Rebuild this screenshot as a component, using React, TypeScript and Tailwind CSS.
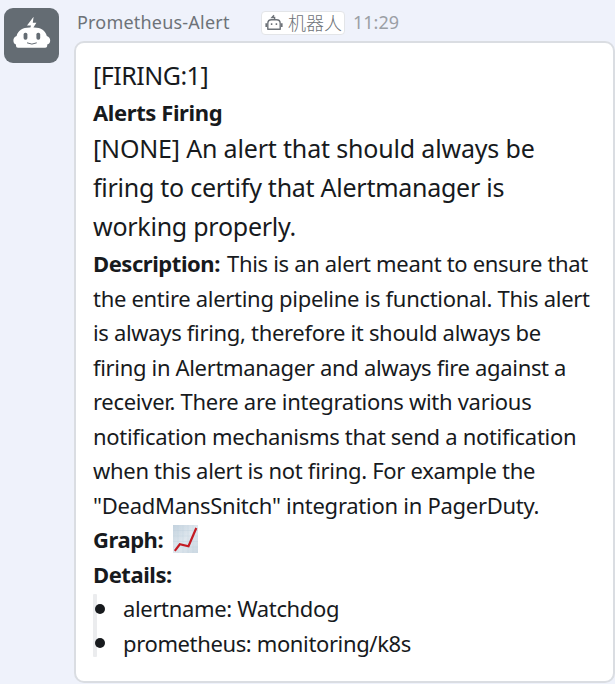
const description = [
    { text: 'the entire alerting pipeline is functional. This alert', tracking: 'tracking-[-0.3px]' },
    { text: 'is always firing, therefore it should always be', tracking: 'tracking-[-0.32px]' },
    { text: 'firing in Alertmanager and always fire against a', tracking: 'tracking-[-0.33px]' },
    { text: 'receiver. There are integrations with various', tracking: 'tracking-[-0.29px]' },
    { text: 'notification mechanisms that send a notification', tracking: 'tracking-[-0.3px]' },
    { text: 'when this alert is not firing. For example the', tracking: 'tracking-[-0.3px]' },
    { text: '"DeadMansSnitch" integration in PagerDuty.', tracking: 'tracking-[-0.27px]' },
];

const details = [
    { text: 'alertname: Watchdog', tracking: 'tracking-[-0.35px]' },
    { text: 'prometheus: monitoring/k8s', tracking: 'tracking-[-0.37px]' },
];

function Avatar() {
    return (
        <svg className="mt-[8px] ml-1 h-[55px] w-[55px] shrink-0" viewBox="0 0 55 55">
            <rect width="55" height="55" rx="9" fill="#646c73" />
            <path
                d="M29.6 8.8 L23 17.6 H27 L26.4 19.6 C18.5 19.4 14 22.6 12.6 28 C10.4 28.8 9.4 30.4 9.4 32.6 C9.4 34.7 10.4 36.2 12 36.6 V38 Q12 39.8 14 39.8 H41.2 Q43.2 39.8 43.2 38 V36.6 C45 36.2 46.2 34.7 46.2 32.6 C46.2 30.4 45 28.8 42.8 28 C41.4 22.6 37 19.4 29.4 19.6 L32.4 14.8 H28.8 Z"
                fill="#fff"
            />
            <rect x="19.6" y="24.8" width="3.8" height="7" rx="1.7" fill="#646c73" />
            <rect x="32.4" y="24.8" width="3.8" height="7" rx="1.7" fill="#646c73" />
            <path d="M23.4 35 Q27.9 37.4 32.4 35" fill="none" stroke="#646c73" strokeWidth="1" strokeLinecap="round" />
        </svg>
    );
}

function BotIcon() {
    return (
        <svg className="mt-px h-[18px] w-[18px] shrink-0" viewBox="0 0 18 18" fill="none" stroke="#6d7278">
            <path d="M9.6 5.5 V3.5 H7 L9 1.3" strokeWidth="1.4" />
            <path d="M2.8 15.3 V9.5 Q2.8 5.8 6.5 5.8 H11.5 Q15.2 5.8 15.2 9.5 V15.3 Z" strokeWidth="1.4" strokeLinejoin="round" />
            <path d="M1.2 9.3 V13 M16.8 9.3 V13" strokeWidth="1.6" />
            <path d="M6.6 9.3 V11 M11.4 9.3 V11" strokeWidth="1.5" />
        </svg>
    );
}

function ChartIcon() {
    return (
        <svg className="ml-[10px] h-7 w-[25px]" viewBox="0 0 25 28">
            <defs>
                <linearGradient id="paper" x1="0" y1="0" x2="1" y2="1">
                    <stop offset="0" stopColor="#c3d2de" />
                    <stop offset="0.5" stopColor="#dfe7ee" />
                    <stop offset="1" stopColor="#cbd8e2" />
                </linearGradient>
            </defs>
            <rect width="25" height="28" fill="url(#paper)" />
            <path d="M5 0 V28 M10 0 V28 M15 0 V28 M20 0 V28 M0 5.5 H25 M0 11 H25 M0 16.5 H25 M0 22 H25" stroke="#bccbd8" strokeWidth="0.3" />
            <path d="M1.8 25.8 L6.8 19.3 L15.5 21.3 L23.3 3" fill="none" stroke="#c41a22" strokeWidth="2.2" />
        </svg>
    );
}

export default function App() {
    return (
        <div className="flex h-[684px] w-[615px] overflow-hidden bg-[#eff2fb] font-['Noto_Sans','Noto_Sans_CJK_SC',sans-serif] text-[#171a1d]">
            <Avatar />
            <div className="ml-[15px] w-[542px] shrink-0">
                <div className="flex h-[41px] items-center pt-[3px] pl-[3px] whitespace-nowrap">
                    <span className="w-[184px] text-[18px] tracking-[0.2px] text-[#6d7278]">Prometheus-Alert</span>
                    <span className="mt-px flex h-6 w-[84px] items-center gap-[5px] rounded-[4px] border border-[#e3e5e8] bg-white pl-[3px] text-[18px] text-[#6d7278]">
                        <BotIcon />
                        <span className="font-['Noto_Sans_CJK_SC',sans-serif] font-light">机器人</span>
                    </span>
                    <span className="ml-2 text-[18px] text-[#9b9fa5]">11:29</span>
                </div>

                <div className="h-[642px] w-[541px] rounded-[10px] border-2 border-[#dadde2] bg-white pt-[12.7px] pl-[17px] text-[22px] leading-[34.5px] whitespace-nowrap">
                    <p className="text-[25px] leading-[39px] tracking-[-0.5px]">[FIRING:1]</p>
                    <p className="font-bold tracking-[-0.4px]">Alerts Firing</p>
                    <div className="text-[25px] leading-[39px]">
                        <p className="tracking-[-0.17px]">[NONE] An alert that should always be</p>
                        <p className="tracking-[-0.26px]">firing to certify that Alertmanager is</p>
                        <p className="tracking-[-0.25px]">working properly.</p>
                    </div>
                    <p className="flex">
                        <b className="w-[134px] tracking-[-0.45px]">Description:</b>
                        <span className="tracking-[-0.32px]">This is an alert meant to ensure that</span>
                    </p>
                    {description.map((line) => (
                        <p key={line.text} className={line.tracking}>{line.text}</p>
                    ))}
                    <p className="flex h-[34.5px] items-center">
                        <b className="tracking-[-0.45px]">Graph:</b>
                        <ChartIcon />
                    </p>
                    <p className="font-bold tracking-[-0.45px]">Details:</p>
                    <ul className="flex">
                        <li className="mt-[3px] h-[63px] w-1 shrink-0 list-none rounded-[1px] bg-[#ebecee]" />
                        <li className="-ml-[2px] list-none">
                            {details.map((item) => (
                                <div key={item.text} className="flex items-center">
                                    <span className="mt-px mr-[18px] h-[10px] w-[10px] rounded-full bg-[#171a1d]" />
                                    <span className={item.tracking}>{item.text}</span>
                                </div>
                            ))}
                        </li>
                    </ul>
                </div>
            </div>
        </div>
    );
}
